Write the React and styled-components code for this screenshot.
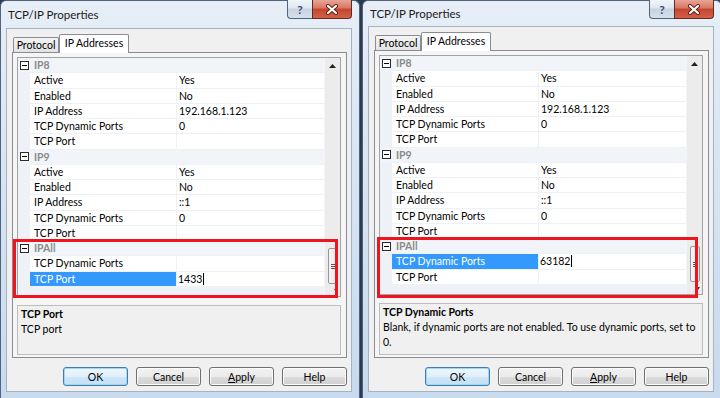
import React from "react";
import styled, { createGlobalStyle } from "styled-components";

const uiFont = `"Segoe UI", Lato, "Noto Sans", sans-serif`;

const GlobalStyle = createGlobalStyle`
  html, body {
    margin: 0;
    padding: 0;
  }
  body {
    font-family: ${uiFont};
    font-size: 10.5px;
    color: #000;
  }
`;

const groups = [
  {
    name: "IP8",
    props: [
      ["Active", "Yes"],
      ["Enabled", "No"],
      ["IP Address", "192.168.1.123"],
      ["TCP Dynamic Ports", "0"],
      ["TCP Port", ""],
    ],
  },
  {
    name: "IP9",
    props: [
      ["Active", "Yes"],
      ["Enabled", "No"],
      ["IP Address", "::1"],
      ["TCP Dynamic Ports", "0"],
      ["TCP Port", ""],
    ],
  },
  {
    name: "IPAll",
    props: [
      ["TCP Dynamic Ports", ""],
      ["TCP Port", ""],
    ],
  },
];

const Dialog = ({ titleH, panelH, descH, selected, editValue, descTitle, descText }) => {
  return (
    <Window>
      <TitleBar $h={titleH}>
        <Title>TCP/IP Properties</Title>
        <Caption>
          <HelpBtn>?</HelpBtn>
          <CloseBtn>
            <svg width="14" height="11" viewBox="0 0 14 11">
              <path d="M3 2 L11 9 M11 2 L3 9" stroke="#5b1d14" strokeWidth="4" strokeLinecap="round" />
              <path d="M3 2 L11 9 M11 2 L3 9" stroke="#fff" strokeWidth="2.2" strokeLinecap="round" />
            </svg>
          </CloseBtn>
        </Caption>
      </TitleBar>
      <Client>
        <TabStrip>
          <Tab $w={46}>Protocol</Tab>
          <Tab $w={70} $active>IP Addresses</Tab>
        </TabStrip>
        <Panel $h={panelH}>
          <Grid>
            <Rows>
              {groups.map((g) => (
                <React.Fragment key={g.name}>
                  <CategoryRow>
                    <MinusBox />
                    <CategoryName>{g.name}</CategoryName>
                  </CategoryRow>
                  {g.props.map(([name, value]) => {
                    const isSel = g.name === "IPAll" && name === selected;
                    return (
                      <PropRow key={name}>
                        <NameCell $selected={isSel}>{name}</NameCell>
                        <ValueCell $editing={isSel}>
                          {isSel ? (
                            <>
                              {editValue}
                              <Caret />
                            </>
                          ) : (
                            value
                          )}
                        </ValueCell>
                      </PropRow>
                    );
                  })}
                </React.Fragment>
              ))}
            </Rows>
            <ScrollBar>
              <ArrowBox $h={16}>
                <svg width="7" height="4" viewBox="0 0 7 4">
                  <polygon points="0,4 7,4 3.5,0" fill="#222" />
                </svg>
              </ArrowBox>
              <Track>
                <Thumb>
                  <Grip />
                  <Grip />
                  <Grip />
                </Thumb>
              </Track>
              <ArrowBox $h={12} $end>
                <svg width="4" height="3" viewBox="0 0 4 3">
                  <polygon points="0,0 4,0 2,3" fill="#333" />
                </svg>
              </ArrowBox>
            </ScrollBar>
          </Grid>
          <Desc $h={descH}>
            <DescTitle>{descTitle}</DescTitle>
            <DescText>{descText}</DescText>
          </Desc>
        </Panel>
        <ButtonRow>
          <Btn $default>OK</Btn>
          <Btn>Cancel</Btn>
          <Btn>
            <u>A</u>pply
          </Btn>
          <Btn>Help</Btn>
        </ButtonRow>
      </Client>
    </Window>
  );
};

const App = () => {
  return (
    <>
      <GlobalStyle />
      <Page>
        <Dialog
          titleH={27}
          panelH={306}
          descH={50}
          selected="TCP Port"
          editValue="1433"
          descTitle="TCP Port"
          descText="TCP port"
        />
        <Dialog
          titleH={25}
          panelH={308}
          descH={52}
          selected="TCP Dynamic Ports"
          editValue="63182"
          descTitle="TCP Dynamic Ports"
          descText="Blank, if dynamic ports are not enabled. To use dynamic ports, set to 0."
        />
        <RedMark $x={13} $y={239} $w={325} $h={59} />
        <RedMark $x={377} $y={237} $w={321} $h={61} />
      </Page>
    </>
  );
};

export default App;

const Page = styled.div`
  position: relative;
  display: flex;
  gap: 2px;
  width: 720px;
  height: 398px;
  overflow: hidden;
  background: #2a3a50;
`;

const Window = styled.div`
  flex-shrink: 0;
  display: flex;
  flex-direction: column;
  width: 360px;
  height: 398px;
  box-sizing: border-box;
  padding: 0 7px 6px 5px;
  border: 1px solid #51647d;
  border-bottom: none;
  border-radius: 6px 6px 0 0;
  background: linear-gradient(180deg, #e7eef7 0%, #dae6f3 35%, #c8daee 100%);
`;

const TitleBar = styled.div`
  display: flex;
  align-items: center;
  height: ${(p) => p.$h}px;
  flex-shrink: 0;
`;

const Title = styled.div`
  padding-left: 2px;
  font-size: 11.5px;
  color: #1b1b1b;
`;

const Caption = styled.div`
  display: flex;
  align-self: flex-start;
  margin-left: auto;
  margin-top: -1px;
`;

const HelpBtn = styled.div`
  width: 25px;
  height: 19px;
  box-sizing: border-box;
  border: 1px solid #52647c;
  border-top: none;
  border-right: none;
  border-radius: 0 0 0 4px;
  background: linear-gradient(180deg, #f1f5fa 0%, #dde6f0 45%, #c7d3e2 50%, #d6e0ec 100%);
  color: #3e4c5e;
  font-weight: bold;
  font-size: 12px;
  display: flex;
  align-items: center;
  justify-content: center;
`;

const CloseBtn = styled.div`
  width: 40px;
  height: 19px;
  box-sizing: border-box;
  border: 1px solid #5e2a22;
  border-top: none;
  border-radius: 0 0 4px 0;
  background: linear-gradient(180deg, #e7a596 0%, #d87663 45%, #c3452c 50%, #d4614a 100%);
  display: flex;
  align-items: center;
  justify-content: center;
`;

const Client = styled.div`
  flex: 1;
  display: flex;
  flex-direction: column;
  background: #f0f0f0;
  border: 1px solid #a3b2c4;
  padding: 0 4px 0 5px;
`;

const TabStrip = styled.div`
  display: flex;
  align-items: flex-end;
  height: 23px;
  padding-left: 1px;
  flex-shrink: 0;
`;

const Tab = styled.div`
  position: relative;
  z-index: ${(p) => (p.$active ? 2 : 1)};
  width: ${(p) => p.$w}px;
  height: ${(p) => (p.$active ? 19 : 15)}px;
  margin-bottom: ${(p) => (p.$active ? -1 : 0)}px;
  box-sizing: border-box;
  border: 1px solid #898c95;
  border-bottom: none;
  border-radius: 2px 2px 0 0;
  background: ${(p) => (p.$active ? "#ffffff" : "linear-gradient(180deg, #f4f4f4, #e3e3e3)")};
  display: flex;
  align-items: center;
  justify-content: center;
  padding-bottom: ${(p) => (p.$active ? 2 : 0)}px;
  white-space: nowrap;
`;

const Panel = styled.div`
  height: ${(p) => p.$h}px;
  box-sizing: border-box;
  border: 1px solid #898c95;
  background: #f5f5f5;
  padding: 4px 5px 0 4px;
  flex-shrink: 0;
`;

const Grid = styled.div`
  display: flex;
  height: 240px;
  box-sizing: border-box;
  border: 1px solid #a3a3a3;
  background: #eef2f7;
`;

const Rows = styled.div`
  flex: 1;
  display: flex;
  flex-direction: column;
`;

const rowBase = `
  display: grid;
  grid-template-columns: 12px 147px 1fr;
  height: 15.25px;
  box-sizing: border-box;
  border-bottom: 1px solid #eef1f6;
  line-height: 14px;
  white-space: nowrap;
`;

const CategoryRow = styled.div`
  ${rowBase}
  align-items: center;
  background: #f1f4f9;
`;

const MinusBox = styled.div`
  position: relative;
  width: 9px;
  height: 9px;
  box-sizing: border-box;
  margin-left: 2px;
  border: 1px solid #2a2a2a;
  background: #fff;

  &::after {
    content: "";
    position: absolute;
    left: 1px;
    right: 1px;
    top: 3px;
    height: 1px;
    background: #000;
  }
`;

const CategoryName = styled.div`
  grid-column: 2 / 4;
  padding-left: 4px;
  color: #8a8a8a;
  font-weight: bold;
`;

const PropRow = styled.div`
  ${rowBase}
  &::before {
    content: "";
  }
`;

const NameCell = styled.div`
  padding-left: 4px;
  background: ${(p) => (p.$selected ? "#3399ff" : "#ffffff")};
  color: ${(p) => (p.$selected ? "#ffffff" : "#000")};
  border-right: 1px solid #eef1f6;
`;

const ValueCell = styled.div`
  display: flex;
  align-items: center;
  padding-left: ${(p) => (p.$editing ? 1 : 2)}px;
  background: #ffffff;
`;

const Caret = styled.span`
  display: inline-block;
  width: 1px;
  height: 12px;
  margin-left: 1px;
  background: #000;
`;

const ScrollBar = styled.div`
  width: 15px;
  display: flex;
  flex-direction: column;
  background: #ececec;
  border-left: 1px solid #f4f4f4;
`;

const ArrowBox = styled.div`
  height: ${(p) => p.$h}px;
  display: flex;
  align-items: center;
  justify-content: ${(p) => (p.$end ? "flex-end" : "center")};
  padding-right: ${(p) => (p.$end ? 2 : 0)}px;
  flex-shrink: 0;
`;

const Track = styled.div`
  flex: 1;
  display: flex;
  flex-direction: column;
  justify-content: flex-end;
  align-items: center;
`;

const Thumb = styled.div`
  width: 10px;
  height: 36px;
  box-sizing: border-box;
  border: 1px solid #979797;
  border-radius: 2px;
  background: linear-gradient(90deg, #f6f6f6, #e6e6e6);
  display: flex;
  flex-direction: column;
  align-items: center;
  justify-content: center;
  gap: 1px;
`;

const Grip = styled.div`
  width: 4px;
  height: 1px;
  background: #555;
`;

const Desc = styled.div`
  margin-top: 8px;
  height: ${(p) => p.$h}px;
  box-sizing: border-box;
  border: 1px solid #bdbdbd;
  background: #f0f0f0;
  padding: 1px 0 1px 3px;
  line-height: 15px;
`;

const DescTitle = styled.div`
  font-weight: bold;
`;

const DescText = styled.div``;

const ButtonRow = styled.div`
  display: flex;
  justify-content: flex-end;
  gap: 8px;
  margin-top: 9px;
`;

const Btn = styled.div`
  width: 65px;
  height: 19px;
  box-sizing: border-box;
  border: 1px solid ${(p) => (p.$default ? "#3c7fb1" : "#707070")};
  border-radius: 3px;
  background: ${(p) =>
    p.$default
      ? "linear-gradient(180deg, #eef7fd 0%, #e0f0fb 50%, #cfe7f8 51%, #c2e0f6 100%)"
      : "linear-gradient(180deg, #f2f2f2 0%, #ebebeb 50%, #dddddd 51%, #cfcfcf 100%)"};
  box-shadow: inset 0 0 0 1px ${(p) => (p.$default ? "#a4d4f3" : "#fcfcfc")};
  display: flex;
  align-items: center;
  justify-content: center;
`;

const RedMark = styled.div`
  position: absolute;
  left: ${(p) => p.$x}px;
  top: ${(p) => p.$y}px;
  width: ${(p) => p.$w}px;
  height: ${(p) => p.$h}px;
  box-sizing: border-box;
  border: 3px solid #f0141e;
  pointer-events: none;
`;
